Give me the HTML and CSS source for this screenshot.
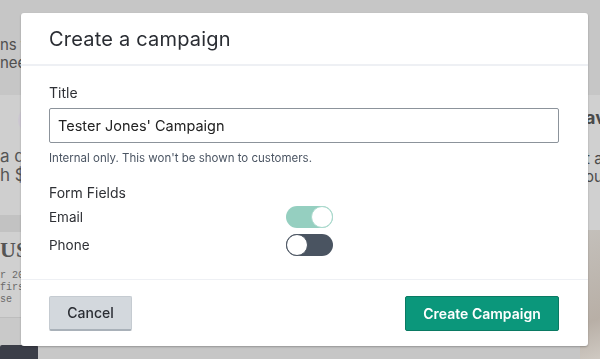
FILE: index.html
```html
<!DOCTYPE html>
<html lang="en">
<head>
  <meta charset="UTF-8">
  <title>Create a campaign</title>
  <link rel="stylesheet" href="styles.css">
</head>
<body>

<!-- pagina de fundo (escurecida pelo modal) -->
<div class="page">
  <div class="col-left">
    <div class="band-top">
      <p>ns for</p>
      <p>need</p>
    </div>
    <div class="band-mid">
      <div class="avatar"></div>
      <p>a dis</p>
      <p>h $5</p>
    </div>
    <div class="band-dark"></div>
    <div class="card-serif">
      <h2>US</h2>
      <pre>r 20
firs
se</pre>
    </div>
    <div class="band-low"></div>
    <div class="btn-dark"></div>
  </div>
  <div class="col-mid"></div>
  <div class="col-right">
    <div class="band-top"></div>
    <div class="band-mid">
      <h3>av</h3>
      <p>t a</p>
      <p>ou</p>
    </div>
    <div class="photo"></div>
  </div>
</div>

<div class="modal">
  <div class="modal-header">
    <h1>Create a campaign</h1>
  </div>

  <div class="modal-body">
    <label class="field-label">Title</label>
    <input class="text-input" value="Tester Jones' Campaign">
    <p class="help">Internal only. This won't be shown to customers.</p>

    <p class="section-label">Form Fields</p>
    <div class="fields">
      <span>Email</span>
      <span class="toggle on"><span class="knob"></span></span>
      <span>Phone</span>
      <span class="toggle off"><span class="knob"></span></span>
    </div>
  </div>

  <div class="modal-footer">
    <button class="btn btn-cancel">Cancel</button>
    <button class="btn btn-primary">Create Campaign</button>
  </div>
</div>

</body>
</html>
```

FILE: styles.css
```css
body {
  margin: 0;
  font-family: 'Inter', 'Noto Sans', sans-serif;
  background-color: #c8c8c8;
  overflow: hidden;
  height: 359px;
}
p { margin: 0; }

/* fundo */
.page {
  display: flex;
  height: 359px;
}
.col-left {
  width: 60px;
  display: flex;
  flex-direction: column;
  overflow: hidden;
  color: #5a5a5a;
}
.col-left .band-top {
  height: 95px;
  background-color: #c6c6c6;
  padding-top: 36px;
  box-sizing: border-box;
  font-size: 15px;
  line-height: 18px;
  color: #4f4f4f;
}
.col-left .band-mid {
  height: 120px;
  background-color: #cfcfcf;
  box-sizing: border-box;
  padding-top: 12px;
  font-size: 17px;
  line-height: 19px;
  color: #555;
}
.avatar {
  width: 26px;
  height: 26px;
  margin-left: 18px;
  border-radius: 50%;
  background-color: #cdc8d2;
  margin-bottom: 14px;
}
.band-dark {
  height: 17px;
  background-color: #c2c2c2;
}
.card-serif {
  height: 86px;
  background-color: #d0d0d0;
  border-bottom: 1px solid #bdbdbd;
  box-sizing: border-box;
  padding-top: 6px;
}
.card-serif h2 {
  margin: 0;
  font-family: 'Liberation Serif', serif;
  font-size: 22px;
  line-height: 24px;
  color: #555;
}
.card-serif pre {
  margin: 8px 0 0;
  font-family: 'Liberation Mono', monospace;
  font-size: 10px;
  line-height: 12px;
  color: #6a6a6a;
}
.band-low {
  height: 27px;
  background-color: #c9c9c9;
}
.btn-dark {
  width: 38px;
  height: 14px;
  background-color: #3b3e48;
  border-radius: 2px 2px 0 0;
}
.col-mid {
  flex: 1;
  background-color: #c6c6c6;
}
.col-right {
  width: 20px;
  display: flex;
  flex-direction: column;
  overflow: hidden;
}
.col-right .band-top {
  height: 95px;
  background-color: #c6c6c6;
}
.col-right .band-mid {
  height: 135px;
  background-color: #d0d0d0;
  padding-top: 13px;
  box-sizing: border-box;
  color: #4a4a4a;
  font-size: 15px;
  line-height: 18px;
  text-indent: 5px;
  white-space: nowrap;
}
.col-right h3 {
  margin: 0 0 22px;
  font-size: 18px;
  line-height: 20px;
}
.photo {
  flex: 1;
  background: linear-gradient(160deg, #c4c0bb, #b8afa6 70%, #cfc9c2);
}

/* modal */
.modal {
  position: fixed;
  left: 21px;
  top: 13px;
  width: 567px;
  height: 333px;
  background-color: #ffffff;
  border-radius: 3px;
  box-shadow: 0 1px 2px rgba(0, 0, 0, 0.25);
  display: flex;
  flex-direction: column;
  color: #222;
}
.modal-header {
  height: 51px;
  border-bottom: 2px solid #eef0f4;
  padding-left: 28px;
  display: flex;
  align-items: center;
}
.modal-header h1 {
  margin: 0;
  font-size: 20px;
  font-weight: 400;
  color: #2a2d33;
  letter-spacing: 0.2px;
}
.modal-body {
  padding: 18px 29px 0 28px;
  flex: 1;
  border-bottom: 1px solid #eef0f4;
}
.field-label {
  display: block;
  font-size: 14px;
  line-height: 18px;
  color: #2e3035;
  margin-bottom: 6px;
}
.text-input {
  display: block;
  box-sizing: border-box;
  width: 100%;
  height: 35px;
  border: 1px solid #8c939b;
  border-radius: 2px;
  padding: 0 8px;
  font-family: inherit;
  font-size: 14.5px;
  color: #222;
}
.help {
  font-size: 11.5px;
  line-height: 14px;
  color: #4b5563;
  margin-top: 8px;
}
.section-label {
  margin-top: 19px;
  font-size: 14px;
  line-height: 18px;
  color: #2e3035;
}
.fields {
  display: grid;
  grid-template-columns: 237px auto;
  row-gap: 6px;
  align-items: center;
  justify-content: start;
  margin-top: 4px;
  font-size: 13.5px;
  color: #2e3035;
}
.toggle {
  display: flex;
  width: 47px;
  height: 22px;
  border-radius: 11px;
  box-sizing: border-box;
}
.toggle .knob {
  width: 22px;
  height: 22px;
  box-sizing: border-box;
  border-radius: 50%;
  background-color: #ffffff;
}
.toggle.on {
  background-color: #95cfc0;
  justify-content: flex-end;
}
.toggle.on .knob {
  border: 1px solid #a9d9cc;
}
.toggle.off {
  background-color: #4a5461;
}
.toggle.off .knob {
  border: 1px solid #4a5461;
}
.modal-footer {
  height: 66px;
  padding: 16px 29px 0 28px;
  box-sizing: border-box;
  display: flex;
  justify-content: space-between;
  align-items: flex-start;
}
.btn {
  height: 35px;
  font-family: inherit;
  font-size: 14px;
  border-radius: 2px;
  cursor: pointer;
  padding-top: 0;
  padding-bottom: 1px;
}
.btn-cancel {
  width: 83px;
  background-color: #d3d8dd;
  border: 1px solid #c5cbd1;
  border-bottom: 2px solid #a9b1b9;
  color: #2a2d33;
  font-weight: 500;
}
.btn-primary {
  width: 154px;
  background-color: #0b977b;
  border: 1px solid #0a7a63;
  color: #ffffff;
  font-weight: 600;
}
```
